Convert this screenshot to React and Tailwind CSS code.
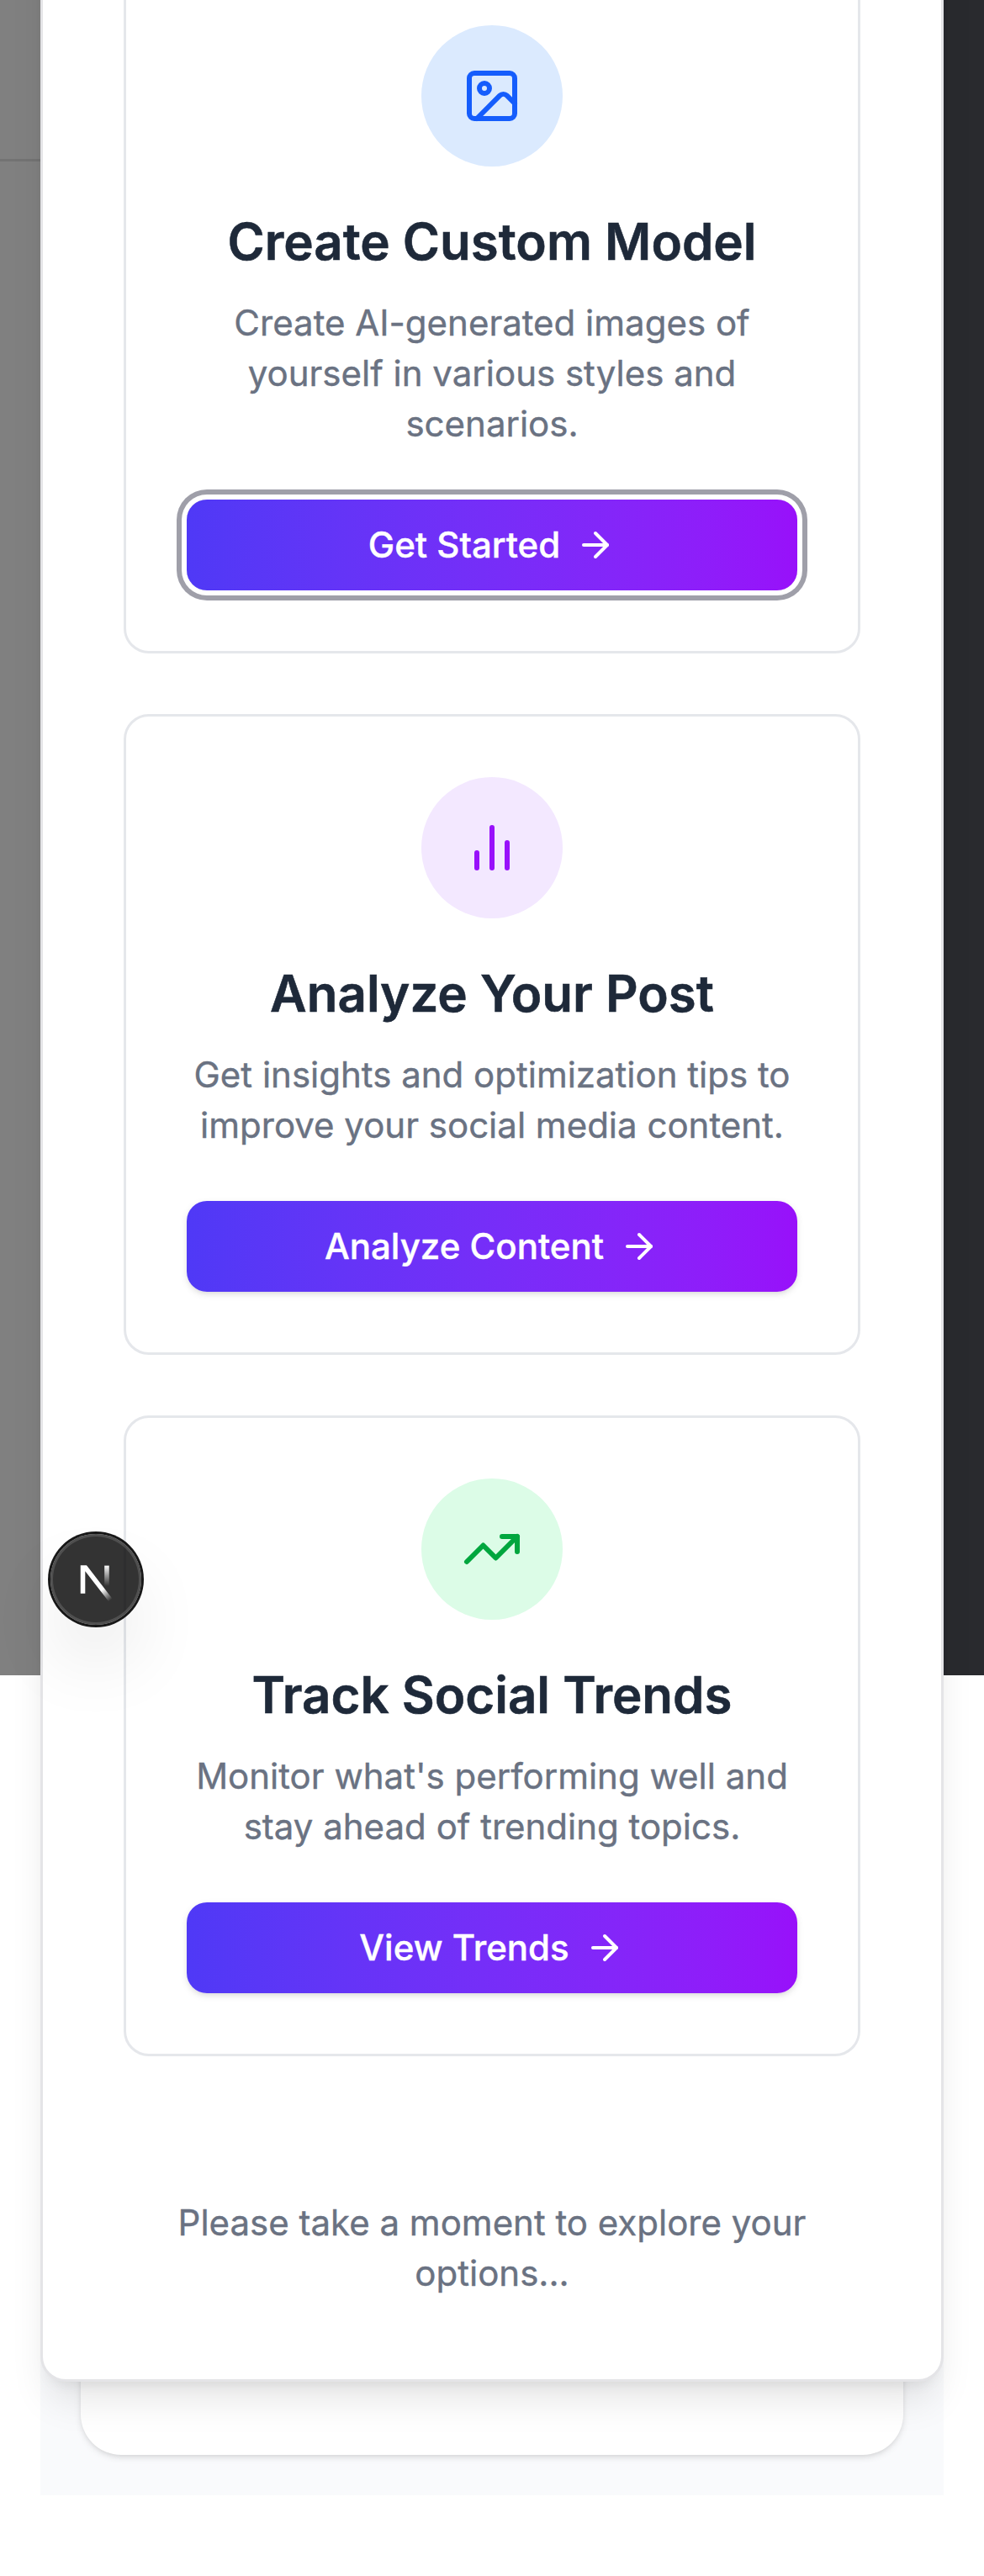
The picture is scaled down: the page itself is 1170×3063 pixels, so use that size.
import React from 'react';

function ImageIcon() {
  return (
    <>
      <rect width="18" height="18" x="3" y="3" rx="2" ry="2" />
      <circle cx="9" cy="9" r="2" />
      <path d="m21 15-3.086-3.086a2 2 0 0 0-2.828 0L6 21" />
    </>
  );
}

function BarsIcon() {
  return (
    <>
      <line x1="18" x2="18" y1="20" y2="10" />
      <line x1="12" x2="12" y1="20" y2="4" />
      <line x1="6" x2="6" y1="20" y2="14" />
    </>
  );
}

function TrendIcon() {
  return (
    <>
      <polyline points="22 7 13.5 15.5 8.5 10.5 2 17" />
      <polyline points="16 7 22 7 22 13" />
    </>
  );
}

function Icon({ className, children }) {
  return (
    <svg
      viewBox="0 0 24 24"
      fill="none"
      stroke="currentColor"
      strokeWidth="2"
      strokeLinecap="round"
      strokeLinejoin="round"
      className={className}
    >
      {children}
    </svg>
  );
}

const options = [
  {
    title: 'Create Custom Model',
    text: 'Create AI-generated images of yourself in various styles and scenarios.',
    action: 'Get Started',
    Glyph: ImageIcon,
    tone: 'bg-[#dbeafe] text-[#155dfc]',
    focused: true,
  },
  {
    title: 'Analyze Your Post',
    text: 'Get insights and optimization tips to improve your social media content.',
    action: 'Analyze Content',
    Glyph: BarsIcon,
    tone: 'bg-[#f3e8ff] text-[#9810fa]',
  },
  {
    title: 'Track Social Trends',
    text: "Monitor what's performing well and stay ahead of trending topics.",
    action: 'View Trends',
    Glyph: TrendIcon,
    tone: 'bg-[#dcfce7] text-[#00a63e]',
  },
];

function OptionCard({ title, text, action, Glyph, tone, focused }) {
  return (
    <div className="flex flex-col items-center rounded-[30px] border-[3px] border-[#e5e7eb] p-[72px] text-center">
      <div className={'mb-[47px] flex size-[168px] items-center justify-center rounded-full ' + tone}>
        <Icon className="size-[72px]">
          <Glyph />
        </Icon>
      </div>
      <h3 className="mb-[25px] text-[60px] leading-[84px] font-semibold whitespace-nowrap text-[#1e2939] [-webkit-text-stroke:0.6px_currentColor]">{title}</h3>
      <p className="mb-[60px] text-[42px] leading-[60px] text-[#6a7282] [-webkit-text-stroke:0.4px_currentColor]">{text}</p>
      <button
        className={
          'flex h-[108px] w-full items-center justify-center gap-[18px] rounded-[24px] bg-linear-to-r from-[#4f39f6] to-[#9810fa] text-[42px] leading-[60px] font-medium text-white ' +
          (focused
            ? 'shadow-[0_0_0_6px_#fff,0_0_0_12px_#9f9fa9]'
            : 'shadow-[0_3px_9px_0_rgba(0,0,0,0.1),0_3px_6px_-3px_rgba(0,0,0,0.1)]')
        }
      >
        <span className="[-webkit-text-stroke:0.4px_currentColor]">{action}</span>
        <Icon className="size-12">
          <path d="M5 12h14" />
          <path d="m12 5 7 7-7 7" />
        </Icon>
      </button>
    </div>
  );
}

function DevBadge() {
  return (
    <div className="absolute top-[1824px] left-[60px] size-[108px] rounded-full bg-black/80 shadow-[0_0_0_3px_#171717,inset_0_0_0_3px_rgba(255,255,255,0.14),0_48px_96px_-24px_rgba(0,0,0,0.24)]">
      <svg viewBox="0 0 36 36" className="size-full" fill="none">
        <defs>
          <linearGradient id="diagonal" gradientUnits="userSpaceOnUse" x1="9.95555" y1="11.1226" x2="15.4778" y2="17.9671">
            <stop stopColor="white" />
            <stop offset="0.604072" stopColor="white" stopOpacity="0" />
            <stop offset="1" stopColor="white" stopOpacity="0" />
          </linearGradient>
          <linearGradient id="stem" gradientUnits="userSpaceOnUse" x1="11.8222" y1="1.40039" x2="11.792" y2="9.62542">
            <stop stopColor="white" />
            <stop offset="1" stopColor="white" stopOpacity="0" />
          </linearGradient>
          <clipPath id="logo-bounds">
            <rect x="0" y="1.4" width="18" height="16" />
          </clipPath>
        </defs>
        <g transform="translate(10.5 11)" clipPath="url(#logo-bounds)" strokeWidth="1.86">
          <path d="M13.3 15.2 L2.34 1 V12.6" stroke="url(#diagonal)" />
          <path d="M11.825 1.5 V13.1" stroke="url(#stem)" />
        </g>
      </svg>
    </div>
  );
}

export default function App() {
  return (
    <div className="relative grid h-[3063px] w-[1170px] grid-cols-1 grid-rows-[3063px] overflow-hidden bg-white font-['Inter',sans-serif]">
      {/* page behind the dialog */}
      <div className="col-start-1 row-start-1 mx-12 h-[2967px] bg-[#f9fafc] px-12 pb-12">
        <div className="h-full rounded-b-[48px] bg-white shadow-[0_3px_9px_0_rgba(0,0,0,0.1),0_3px_6px_-3px_rgba(0,0,0,0.1)]" />
      </div>
      {/* dimmed viewport */}
      <div className="col-start-1 row-start-1 flex h-[1992px] justify-between">
        <div className="w-12 bg-[#808080]">
          <div className="h-48 border-b-[3px] border-[#737373]" />
        </div>
        <div className="w-12 bg-[#292a2e]" />
      </div>
      {/* dialog */}
      <div className="col-start-1 row-start-1 mx-12 -mt-[144px] h-[2976px] rounded-[30px] border-[3px] border-[#e4e4e7] bg-white px-24 pt-24 pb-24 shadow-[0_30px_45px_-9px_rgba(0,0,0,0.1),0_12px_18px_-12px_rgba(0,0,0,0.1)]">
        <div className="flex flex-col gap-[72px]">
          {options.map((option) => (
            <OptionCard key={option.title} {...option} />
          ))}
        </div>
        <p className="mt-[168px] text-center text-[42px] leading-[60px] text-[#6a7282] [-webkit-text-stroke:0.4px_currentColor]">
          Please take a moment to explore your options...
        </p>
      </div>
      <DevBadge />
    </div>
  );
}
